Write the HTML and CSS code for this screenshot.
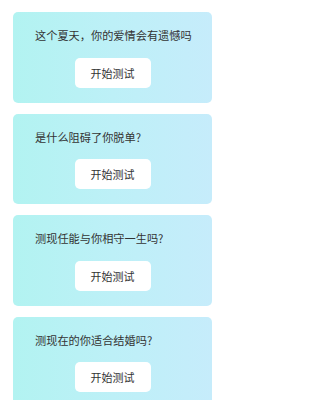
FILE: index.html
```html
<!DOCTYPE html>
<html lang="zh-CN">
<head>
<meta charset="utf-8">
<meta name="viewport" content="width=225">
<title>测试</title>
<link rel="stylesheet" href="styles.css">
</head>
<body>
<div class="list">
  <div class="card">
    <div class="title">这个夏天，你的爱情会有遗憾吗</div>
    <div class="btn">开始测试</div>
  </div>
  <div class="card">
    <div class="title">是什么阻碍了你脱单?</div>
    <div class="btn">开始测试</div>
  </div>
  <div class="card">
    <div class="title">测现任能与你相守一生吗?</div>
    <div class="btn">开始测试</div>
  </div>
  <div class="card">
    <div class="title">测现在的你适合结婚吗?</div>
    <div class="btn">开始测试</div>
  </div>
</div>
</body>
</html>
```
FILE: styles.css
```css
html, body {
  margin: 0;
  padding: 0;
  background: #ffffff;
}
body {
  font-family: "Noto Sans CJK SC", "Noto Sans", sans-serif;
  color: #333333;
}
.list {
  box-sizing: border-box;
  width: 225px;
  display: flex;
  flex-direction: column;
  gap: 11px;
  padding: 12px 13px;
}
.card {
  box-sizing: border-box;
  height: 90.5px;
  border-radius: 5px;
  background: linear-gradient(90deg, #b2f3f1 0%, #bdf0f7 50%, #c6ecfb 100%);
  padding: 16px 22px 0;
  display: flex;
  flex-direction: column;
}
.title {
  font-size: 11.2px;
  line-height: 14px;
  color: #333333;
  white-space: nowrap;
}
.btn {
  align-self: center;
  margin-top: 15.5px;
  width: 76px;
  height: 30px;
  border-radius: 5px;
  background: #ffffff;
  font-size: 11px;
  line-height: 30px;
  text-align: center;
  color: #333333;
}
```
